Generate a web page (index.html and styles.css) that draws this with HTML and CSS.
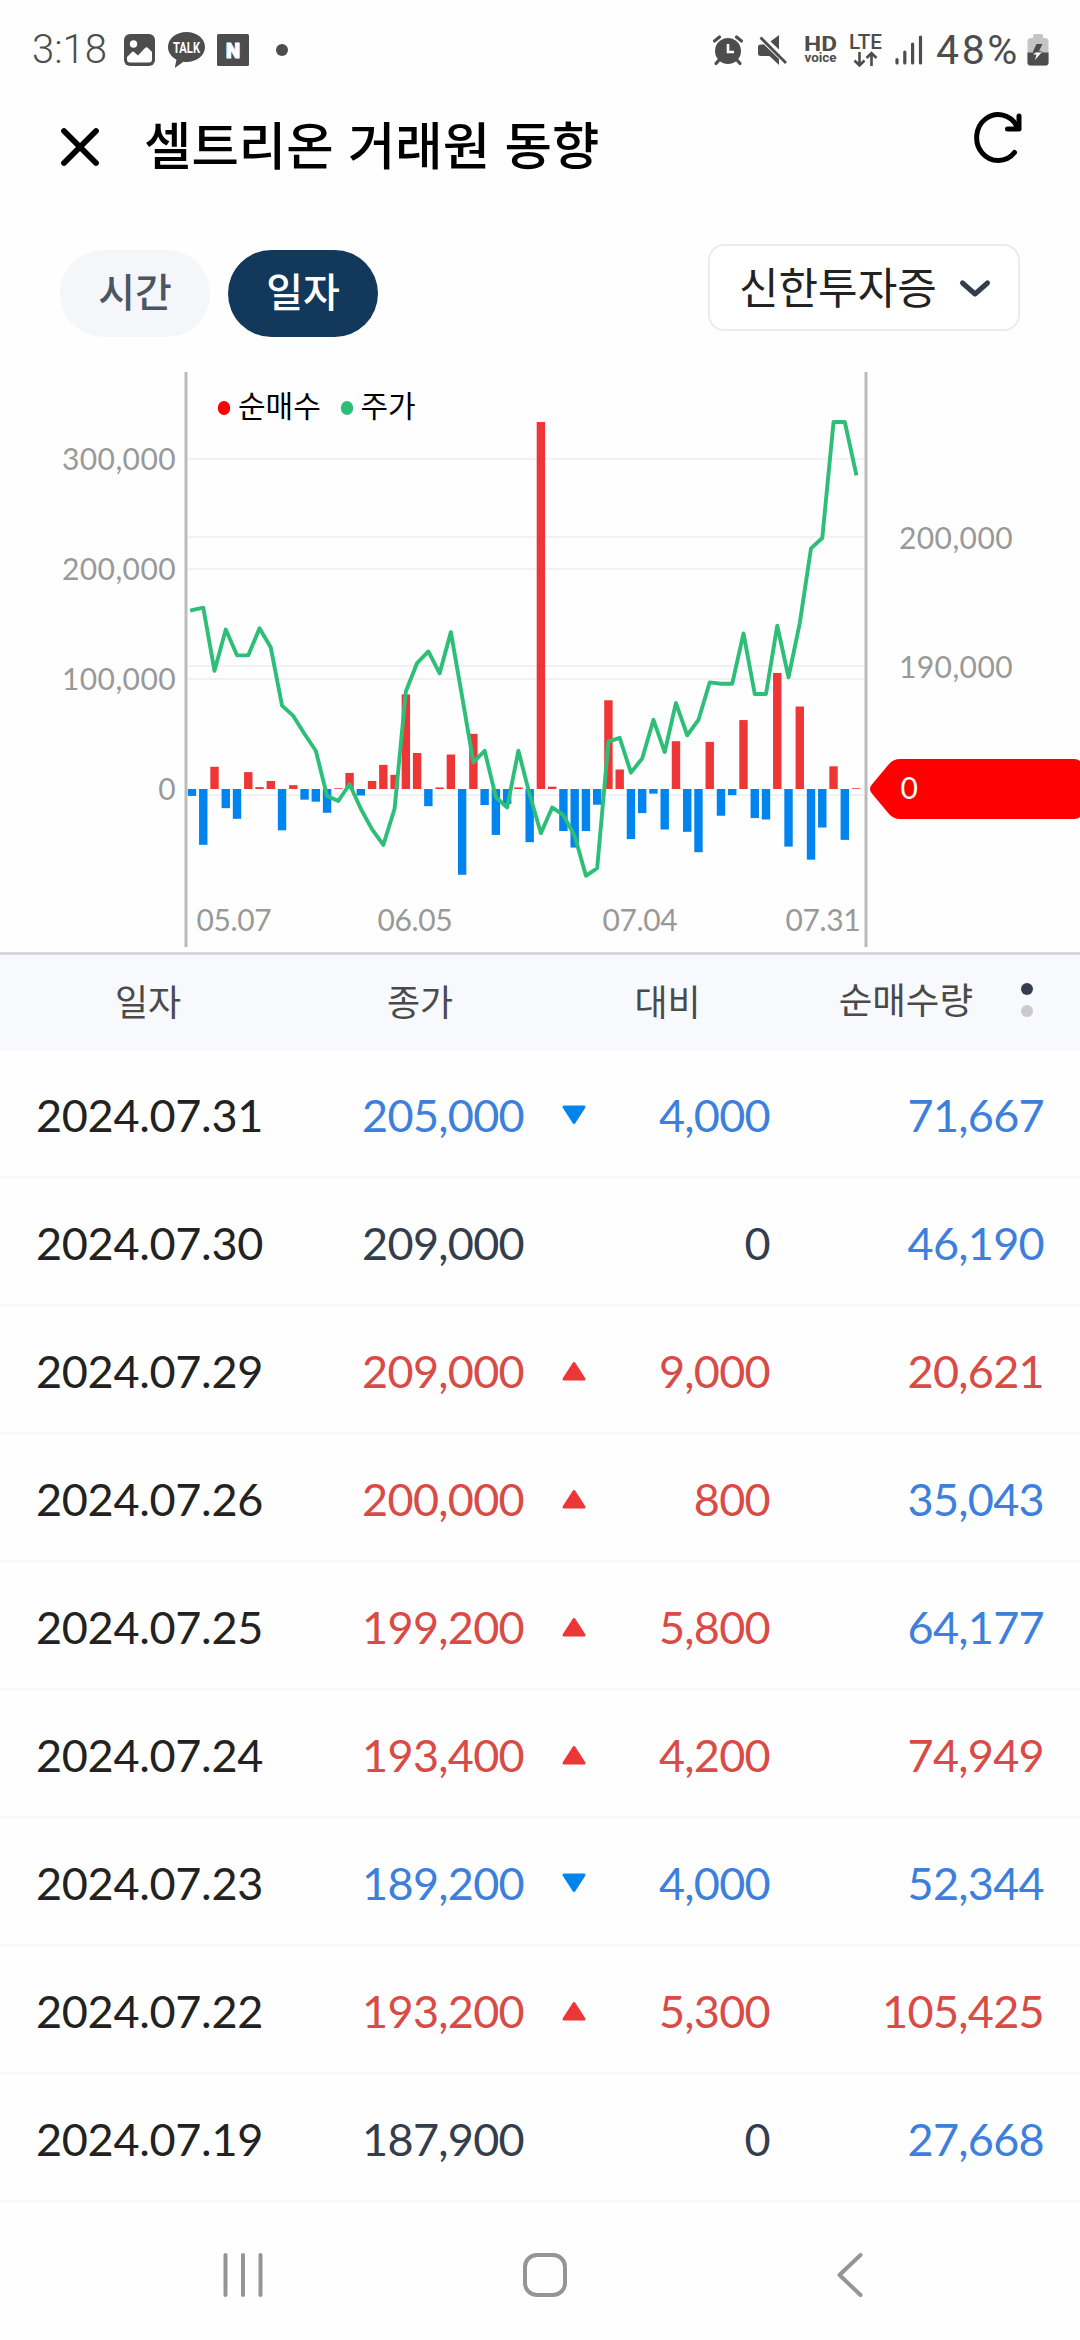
FILE: index.html
```
<!DOCTYPE html>
<html lang="ko">
<head>
  <meta charset="UTF-8">
  <meta name="viewport" content="width=device-width, initial-scale=1.0">
  <title>셀트리온 거래원 동향</title>
  <link rel="stylesheet" href="styles.css">
</head>
<body>
  <div class="status-bar">
    <div class="status-left">
      <span class="clock">3:18</span>
      <svg class="icon-photo" width="31" height="32" viewBox="0 0 31 32">
        <rect width="31" height="32" rx="6" fill="#4d4d4d"/>
        <circle cx="9.500" cy="10" r="3.700" fill="#fff"/>
        <path d="M3 23l5-5q1-1 2 0l4 3.500 7-7.500q1.500-1.500 3 0l4 4v7.500q0 3-3 3H6q-3 0-3-3z" fill="#fff"/>
      </svg>
      <svg class="icon-talk" width="37" height="36" viewBox="0 0 37 36">
        <path d="M18.500 0C8.300 0 0 6.600 0 15c0 5.400 3.400 10 8.400 12.700L6.800 36l8.600-6.200c1 .2 2 .2 3.100.2C28.700 30 37 23.400 37 15S28.700 0 18.500 0z" fill="#4d4d4d"/>
        <text x="18.500" y="21" text-anchor="middle" textLength="27" lengthAdjust="spacingAndGlyphs">TALK</text>
      </svg>
      <svg class="icon-n" width="32" height="32" viewBox="0 0 32 32">
        <rect width="32" height="32" rx="1.500" fill="#4d4d4d"/>
        <text x="16" y="23.500" text-anchor="middle">N</text>
      </svg>
      <span class="more-dot"></span>
    </div>
    <div class="status-right">
      <svg class="icon-alarm" width="30" height="30" viewBox="0 0 30 30">
        <circle cx="15" cy="16" r="13" fill="#4d4d4d"/>
        <path d="M1.500 6l5-4M28.500 6l-5-4M6 25l-3 3.500M24 25l3 3.500" stroke="#4d4d4d" stroke-width="3.200" stroke-linecap="round"/>
        <path d="M15 9v8h6" fill="none" stroke="#fff" stroke-width="2.600"/>
      </svg>
      <svg class="icon-mute" width="30" height="30" viewBox="0 0 30 30">
        <path d="M0 12q0-2.500 2.500-2.500H6L21 24v6l-9.500-9H3Q0 21 0 18.500zM12.500 6.500L21 0v14.500z" fill="#4d4d4d"/>
        <path d="M2.500 2.500L28 28" stroke="#4d4d4d" stroke-width="2.800"/>
      </svg>
      <svg class="icon-hd" width="33" height="32" viewBox="0 0 33 32">
        <text x="0" y="17" class="hd" textLength="33" lengthAdjust="spacingAndGlyphs">HD</text>
        <text x="0.500" y="28" class="voice" textLength="32" lengthAdjust="spacingAndGlyphs">voice</text>
      </svg>
      <svg class="icon-lte" width="34" height="34" viewBox="0 0 34 34">
        <text x="0" y="15.500" class="lte" textLength="33" lengthAdjust="spacingAndGlyphs">LTE</text>
        <path d="M10.500 19v13.500M5.500 27.500l5 5 5-5M22.500 33V20M17.500 25l5-5 5 5" fill="none" stroke="#4d4d4d" stroke-width="2.600"/>
      </svg>
      <svg class="icon-signal" width="28" height="30" viewBox="0 0 28 30">
        <path d="M2 24.500v3.500M9.800 17v11M17.600 9v19M25.500 2v26" stroke="#4d4d4d" stroke-width="3.200" stroke-linecap="round"/>
      </svg>
      <span class="percent">48%</span>
      <svg class="icon-battery" width="22" height="32" viewBox="0 0 22 32">
        <path d="M6 2q0-2 2-2h6q2 0 2 2v2h2q3.500 0 3.500 3.500v21q0 3-3 3h-15q-3 0-3-3v-21Q.5 4 4 4h2z" fill="#c4c4c4"/>
        <path d="M.5 18.500h21v10q0 3-3 3h-15q-3 0-3-3z" fill="#4d4d4d"/>
        <path d="M9.500 10L5.500 18.500h5.500l5-1.500H12l3.500-7z" fill="#4d4d4d"/>
        <path d="M9 18.500h5.500L8 26l1.500-5.500H6z" fill="#fff"/>
      </svg>
    </div>
  </div>

  <div class="header">
    <svg class="close" width="40" height="40" viewBox="0 0 40 40">
      <path d="M4 4l32 32M36 4L4 36" stroke="#000" stroke-width="5.800" stroke-linecap="round"/>
    </svg>
    <h1>셀트리온 거래원 동향</h1>
    <svg class="refresh" width="50" height="54" viewBox="0 0 50 54">
      <path d="M41.500 42.500A21.500 23 0 1 1 44 16.500" fill="none" stroke="#000" stroke-width="5" stroke-linecap="round"/>
      <path d="M46 6v13H34.500" fill="none" stroke="#000" stroke-width="5" stroke-linecap="round" stroke-linejoin="round"/>
    </svg>
  </div>

  <div class="controls">
    <button class="pill">시간</button>
    <button class="pill active">일자</button>
    <button class="select">
      <span>신한투자증</span>
      <svg width="32" height="20" viewBox="0 0 32 20">
        <path d="M3.500 4L16 15 28.500 4" fill="none" stroke="#343d4b" stroke-width="5" stroke-linecap="round" stroke-linejoin="round"/>
      </svg>
    </button>
  </div>

  <svg class="chart" id="chart" width="1080" height="581" viewBox="0 371 1080 581">
    <g id="grid"></g>
    <g id="bars"></g>
    <polyline id="priceLine" class="price-line"/>
    <path class="axis" d="M186 372v575M866 372v575"/>
    <g class="legend">
      <ellipse cx="224" cy="408" rx="6.200" ry="7" fill="#ff0000"/>
      <text x="238" y="417">순매수</text>
      <ellipse cx="347" cy="408" rx="6.200" ry="7" fill="#2dbe78"/>
      <text x="360.500" y="417">주가</text>
    </g>
    <g class="labels labels-left">
      <text x="176" y="470">300,000</text>
      <text x="176" y="580">200,000</text>
      <text x="176" y="690">100,000</text>
      <text x="176" y="800">0</text>
    </g>
    <g class="labels">
      <text x="899" y="549">200,000</text>
      <text x="899" y="678">190,000</text>
    </g>
    <g class="labels labels-date">
      <text x="196.500" y="930.500">05.07</text>
      <text x="377.500" y="930.500">06.05</text>
      <text x="602.500" y="930.500">07.04</text>
      <text x="785.500" y="930.500">07.31</text>
    </g>
    <path class="tag" d="M871.500 785L889 764q4.500-5 11-5h174q4 0 6 2v56q-2 2-6 2H900q-6.500 0-11-5l-17.500-21q-3-4 0-8z"/>
    <text class="tag-text" x="900.500" y="799">0</text>
  </svg>

  <div class="table">
    <div class="row head">
      <div class="date">일자</div>
      <div class="close-price">종가</div>
      <div class="diff">대비</div>
      <div class="volume">순매수량</div>
      <div class="pager"><i class="on"></i><i></i></div>
    </div>
    <div id="rows"></div>
  </div>

  <div class="nav-bar">
    <svg width="44" height="46" viewBox="0 0 44 46">
      <path d="M4.500 3v40M22 3v40M39.500 3v40" stroke="#959595" stroke-width="4" stroke-linecap="round"/>
    </svg>
    <svg class="home" width="46" height="46" viewBox="0 0 46 46">
      <rect x="3" y="3" width="40" height="40" rx="12" fill="none" stroke="#959595" stroke-width="4"/>
    </svg>
    <svg width="30" height="48" viewBox="0 0 30 48">
      <path d="M25.500 4L4.500 24l21 20" fill="none" stroke="#959595" stroke-width="4" stroke-linecap="round" stroke-linejoin="round"/>
    </svg>
  </div>

  <script>
    // 순매수 (천주)
    const volumes = [
      -6.3, -50.7, 20.2, -17.4, -27.1, 15.3, 1.7, 7.3, -37.5, 3.5,
      -9.7, -11.5, -21.6, 0.7, 14.6, -5.9, 7.3, 21.9, 12.9, 85.9,
      32.7, -15.6, 1.4, 31.3, -77.9, 50.1, -14.6, -41.7, -13.6, 1.4,
      -48.3, 333.3, 2.1, -38.2, -53.2, -38.2, -14.3, 80.6, 17.7, -45.5,
      -21.9, -4.2, -36.8, 43.4, -38.9, -57.4, 42.8, -24.3, -5.6, 62.6,
      -26.4, -27.7, 105.4, -52.3, 74.9, -64.2, -35, 20.6, -46.2, 0.7
    ];
    // 주가 (천원)
    const prices = [
      194.4, 194.6, 189.7, 192.9, 190.9, 190.9, 193, 191.5, 187, 186.2,
      184.8, 183.5, 180, 179.6, 180.9, 179, 177.4, 176.2, 179, 188.1,
      190.3, 191.2, 189.5, 192.7, 187.7, 182.6, 183.5, 179.9, 179.1, 183.5,
      180.1, 177.1, 179.1, 178.5, 176.9, 173.8, 174.4, 184.2, 184.5, 181.8,
      182.9, 185.9, 183.4, 187.2, 184.7, 185.9, 188.8, 188.7, 188.7, 192.6,
      187.9, 187.9, 193.2, 189.2, 193.4, 199.2, 200, 209, 209, 205
    ];

    const zeroY = 789;
    const xAt = i => 192 + i * 11.255;
    const priceY = p => 538 + (200 - p) * 12.893;

    document.getElementById('grid').innerHTML = [458.8, 537, 569, 666, 679, 795]
      .map(y => `<path class="grid-line" d="M188 ${y}H864"/>`).join('');

    document.getElementById('bars').innerHTML = volumes.map((v, i) => {
      const h = Math.abs(v) * 1.101;
      const y = v > 0 ? zeroY - h : zeroY;
      return `<rect class="${v > 0 ? 'bar-up' : 'bar-down'}" x="${xAt(i) - 4.2}" y="${y}" width="8.4" height="${h}"/>`;
    }).join('');

    document.getElementById('priceLine').setAttribute('points',
      prices.map((p, i) => `${xAt(i)},${priceY(p)}`).join(' '));

    // 일자, 종가, 대비 방향, 대비, 순매수량, 순매수 방향
    const rows = [
      ['2024.07.31', '205,000', 'down', '4,000', '71,667', 'down'],
      ['2024.07.30', '209,000', '', '0', '46,190', 'down'],
      ['2024.07.29', '209,000', 'up', '9,000', '20,621', 'up'],
      ['2024.07.26', '200,000', 'up', '800', '35,043', 'down'],
      ['2024.07.25', '199,200', 'up', '5,800', '64,177', 'down'],
      ['2024.07.24', '193,400', 'up', '4,200', '74,949', 'up'],
      ['2024.07.23', '189,200', 'down', '4,000', '52,344', 'down'],
      ['2024.07.22', '193,200', 'up', '5,300', '105,425', 'up'],
      ['2024.07.19', '187,900', '', '0', '27,668', 'down']
    ];
    const arrows = {
      up: 'M12 2.500L22 18H2z',
      down: 'M12 17.500L22 2H2z',
      '': ''
    };
    document.getElementById('rows').innerHTML = rows.map(r => `
      <div class="row">
        <div class="date">${r[0]}</div>
        <div class="close-price ${r[2]}">${r[1]}</div>
        <svg class="arrow ${r[2]}" width="24" height="20" viewBox="0 0 24 20"><path d="${arrows[r[2]]}"/></svg>
        <div class="diff ${r[2]}">${r[3]}</div>
        <div class="volume ${r[5]}">${r[4]}</div>
      </div>`).join('');
  </script>
</body>
</html>
```
FILE: styles.css
```
* {
  box-sizing: border-box;
}

body {
  margin: 0;
  width: 1080px;
  height: 2340px;
  overflow: hidden;
  background: #fefefe;
  color: #222;
  font-family: Lato, "Noto Sans CJK KR", sans-serif;
}

svg {
  display: block;
  flex-shrink: 0;
  overflow: visible;
}

/* 상태바 */
.status-bar {
  display: flex;
  justify-content: space-between;
  height: 100px;
  padding: 0 31px 0 32px;
  color: #4d4d4d;
  font-family: Roboto, sans-serif;
}

.status-left,
.status-right {
  display: flex;
  align-items: center;
  height: 100px;
}

.clock,
.percent {
  font-size: 40px;
  font-weight: 300;
  line-height: 40px;
}

.clock {
  width: 92px;
}

.icon-talk {
  margin-left: 13px;
}

.icon-talk text {
  fill: #fff;
  font: bold 14px Roboto, sans-serif;
}

.icon-n {
  margin-left: 12px;
}

.icon-n text {
  fill: #fff;
  stroke: #fff;
  stroke-width: 1.2px;
  font: 900 20px Roboto, sans-serif;
}

.more-dot {
  width: 12px;
  height: 12px;
  margin-left: 27px;
  border-radius: 50%;
  background: #4d4d4d;
}

.icon-mute {
  margin-left: 15px;
}

.icon-hd {
  margin-left: 16px;
}

.icon-hd text,
.icon-lte text {
  fill: #4d4d4d;
  font-family: Roboto, sans-serif;
  font-weight: 700;
}

.icon-hd .hd {
  font-size: 21px;
}

.icon-hd .voice {
  font-size: 12.5px;
}

.icon-lte {
  margin-left: 12px;
}

.icon-lte .lte {
  font-size: 21px;
  font-weight: 500;
}

.icon-signal {
  margin: 0 13px 0 12px;
}

.percent {
  width: 91px;
  font-size: 41px;
  font-weight: 400;
  letter-spacing: 2.6px;
}

/* 타이틀 */
.header {
  display: flex;
  height: 150px;
  padding: 0 57px 0 60px;
}

.header .close {
  margin-top: 27px;
}

.header h1 {
  flex: 1;
  margin: 5px 0 0 44px;
  color: #000;
  font-family: "Noto Sans CJK KR", sans-serif;
  font-size: 51.5px;
  font-weight: 500;
  line-height: 76px;
}

.header .refresh {
  margin-top: 10px;
}

/* 필터 */
.controls {
  display: flex;
  gap: 18px;
  height: 121px;
  padding: 0 60px;
}

.controls button {
  height: 87px;
  border: 0;
  font-family: "Noto Sans CJK KR", sans-serif;
}

.pill {
  width: 150px;
  padding: 0 0 7px;
  border-radius: 44px;
  background: #f4f6f9;
  color: #4b5563;
  font-size: 40px;
  font-weight: 500;
}

.pill.active {
  background: #12395c;
  color: #fff;
}

.controls .select {
  display: flex;
  align-items: center;
  justify-content: space-between;
  width: 312px;
  margin: -6px 0 0 auto;
  padding: 0 27px 5px 29px;
  border: 2px solid #e8ebef;
  border-radius: 16px;
  background: #fff;
  color: #222;
  font-size: 43px;
}

.select svg {
  margin-top: 7px;
}

/* 차트 */
.chart {
  font-size: 30px;
}

.grid-line {
  stroke: #f1f1f1;
  stroke-width: 2;
}

.bar-up {
  fill: #ee3636;
}

.bar-down {
  fill: #0284ee;
}

.price-line {
  fill: none;
  stroke: #2dbe78;
  stroke-width: 3.9;
  stroke-linejoin: round;
  stroke-linecap: square;
}

.axis {
  stroke: #bbb;
  stroke-width: 3;
}

.legend text {
  fill: #000;
  font-family: "Noto Sans CJK KR", sans-serif;
}

.labels text {
  fill: #999;
  letter-spacing: 0.4px;
}

.labels-left text {
  text-anchor: end;
}

.labels-date text {
  letter-spacing: -0.4px;
}

.tag {
  fill: #ff0000;
}

.tag-text {
  fill: #fff;
}

/* 표 */
.row {
  display: grid;
  grid-template-columns: 324px 164px 99px 147px 274px;
  align-items: center;
  height: 128px;
  padding: 2px 36px 0;
  border-bottom: 3px solid #f8f8f9;
  font-size: 45px;
  letter-spacing: -0.7px;
  text-align: right;
}

.row .date {
  letter-spacing: -0.3px;
  text-align: left;
}

.close-price,
.diff {
  color: #343d4b;
}

.arrow {
  justify-self: center;
  stroke-width: 3;
  stroke-linejoin: round;
}

.arrow.up {
  fill: #ee3636;
  stroke: #ee3636;
}

.arrow.down {
  fill: #0284ee;
  stroke: #0284ee;
}

.close-price.up,
.diff.up,
.volume.up {
  color: #d84b46;
}

.close-price.down,
.diff.down,
.volume.down {
  color: #3d80dc;
}

.row.head {
  grid-template-columns: 224px 320px 175px 218px 1fr;
  height: 99px;
  padding: 0 36px 6px;
  border-top: 3px solid #d6d8d9;
  border-bottom: 0;
  background: #f8f9fd;
  font-family: "Noto Sans CJK KR", sans-serif;
  font-size: 36px;
  letter-spacing: 0;
  text-align: center;
}

.row.head div {
  color: #4a4a4a;
  letter-spacing: 0;
}

.row.head .date {
  text-align: center;
}

.row.head .volume {
  padding-bottom: 4px;
  font-size: 36.5px;
  text-align: right;
}

.pager {
  display: flex;
  flex-direction: column;
  align-items: flex-end;
  gap: 10px;
  padding-right: 11px;
}

.pager i {
  width: 12px;
  height: 12px;
  border-radius: 50%;
  background: #cac9ce;
}

.pager .on {
  background: #343d4f;
}

/* 내비게이션 바 */
.nav-bar {
  display: flex;
  align-items: center;
  justify-content: space-between;
  height: 137px;
  padding: 7px 215px 0 221px;
}

.nav-bar .home {
  margin-right: 11px;
}
```
